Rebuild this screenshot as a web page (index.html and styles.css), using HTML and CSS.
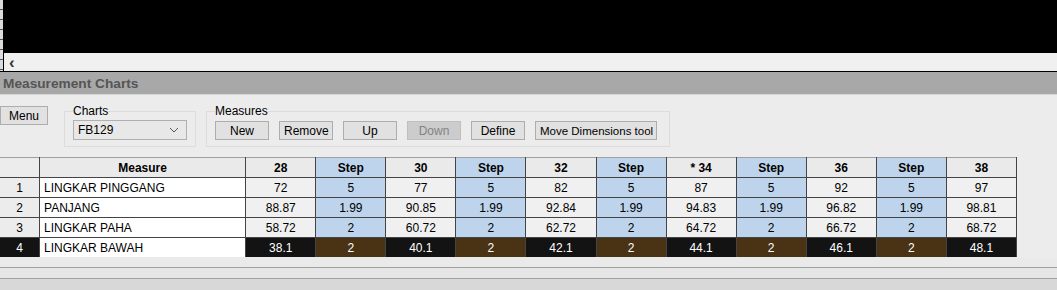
FILE: index.html
```html
<!DOCTYPE html>
<html lang="en">
<head>
  <meta charset="UTF-8" />
  <title>Measurement Charts</title>
  <link rel="stylesheet" href="styles.css">
</head>
<body>
  <div class="viewer">
    <div class="ruler"></div>
    <div class="viewer-main">
      <div class="canvas"></div>
      <div class="hscroll"><span class="arrow">&lsaquo;</span></div>
    </div>
  </div>

  <div class="title">Measurement Charts</div>

  <div class="toolbar">
    <button class="btn menu-btn">Menu</button>

    <fieldset class="group charts">
      <legend>Charts</legend>
      <div class="combo">
        <span>FB129</span>
        <svg width="10" height="6" viewBox="0 0 10 6"><path d="M1 1 L5 5 L9 1" fill="none" stroke="#555" stroke-width="1"/></svg>
      </div>
    </fieldset>

    <fieldset class="group measures">
      <legend>Measures</legend>
      <button class="btn w54">New</button>
      <button class="btn w54">Remove</button>
      <button class="btn w54">Up</button>
      <button class="btn w54 disabled">Down</button>
      <button class="btn w54">Define</button>
      <button class="btn wide">Move Dimensions tool</button>
    </fieldset>
  </div>

  <div class="grid-area">
    <table class="chart" id="chart"></table>
  </div>

  <div class="status">
    <div class="status-a"></div>
    <div class="status-b"></div>
  </div>

  <script>
    const sizes = ['28', '30', '32', '* 34', '36', '38'];
    const rows = [
      { name: 'LINGKAR PINGGANG', vals: ['72', '77', '82', '87', '92', '97'], step: '5' },
      { name: 'PANJANG', vals: ['88.87', '90.85', '92.84', '94.83', '96.82', '98.81'], step: '1.99' },
      { name: 'LINGKAR PAHA', vals: ['58.72', '60.72', '62.72', '64.72', '66.72', '68.72'], step: '2' },
      { name: 'LINGKAR BAWAH', vals: ['38.1', '40.1', '42.1', '44.1', '46.1', '48.1'], step: '2' }
    ];

    let html = '<thead><tr><th class="num"></th><th class="name">Measure</th>';
    sizes.forEach((s, i) => {
      html += `<th>${s}</th>`;
      if (i < sizes.length - 1) html += '<th class="step">Step</th>';
    });
    html += '</tr></thead><tbody>';
    rows.forEach((r, n) => {
      const sel = n === rows.length - 1 ? ' class="selected"' : '';
      html += `<tr${sel}><td class="num">${n + 1}</td><td class="name">${r.name}</td>`;
      r.vals.forEach((v, i) => {
        html += `<td>${v}</td>`;
        if (i < r.vals.length - 1) html += `<td class="step">${r.step}</td>`;
      });
      html += '</tr>';
    });
    html += '</tbody>';
    document.getElementById('chart').innerHTML = html;
  </script>
</body>
</html>
```

FILE: styles.css
```css
body {
  margin: 0;
  background: #ececec;
  font-family: "Liberation Sans", Arial, sans-serif;
  font-size: 12px;
  color: #000;
  width: 1057px;
  height: 290px;
  overflow: hidden;
}
.viewer {
  display: flex;
  height: 71px;
  border-bottom: 1px solid #000;
}
.ruler {
  width: 3px;
  background: #dcdcdc repeating-linear-gradient(to bottom, transparent 0, transparent 9px, #555 9px, #555 10px);
}
.viewer-main {
  flex: 1;
  display: flex;
  flex-direction: column;
}
.canvas {
  height: 53px;
  background: #000;
}
.hscroll {
  flex: 1;
  background: #f0f0f0;
  border-left: 1px solid #000;
  display: flex;
  align-items: center;
  padding-left: 5px;
}
.arrow {
  font-size: 17px;
  font-weight: bold;
  color: #333;
  line-height: 1;
  margin-top: 0;
}
.title {
  height: 22px;
  line-height: 23px;
  background: #a8a8a8;
  color: #555;
  font-weight: bold;
  font-size: 13.7px;
  padding-left: 3px;
  border-bottom: 1px solid #d6d6d6;
}
.toolbar {
  display: flex;
  align-items: flex-start;
  height: 62px;
  background: #ececec;
  box-sizing: border-box;
  padding-top: 10px;
}
.btn {
  font-family: inherit;
  font-size: 12px;
  height: 19px;
  padding: 0 4px;
  background: #e1e1e1;
  border: 1px solid #adadad;
  color: #000;
  margin: 0;
  white-space: nowrap;
}
.menu-btn {
  width: 48px;
  margin-top: 1px;
}
.btn.w54 {
  width: 54px;
}
.btn.wide {
  width: 122px;
  font-size: 11.5px;
}
.btn.disabled {
  background: #cccccc;
  border-color: #bfbfbf;
  color: #838383;
}
.group {
  border: 1px solid #dcdcdc;
  margin: 0;
  padding: 0 8px 0 8px;
  height: 43px;
  box-sizing: border-box;
  position: relative;
  top: -1px;
}
.group legend {
  padding: 0;
  font-size: 12px;
  color: #000;
  margin-left: 0;
}
.charts {
  margin-left: 16px;
  width: 130px;
}
.combo {
  width: 114px;
  height: 20px;
  box-sizing: border-box;
  border: 1px solid #b0b0b0;
  background: #e8e8e8;
  display: flex;
  align-items: center;
  justify-content: space-between;
  padding: 0 7px 0 4px;
  margin-top: 2px;
}
.measures {
  margin-left: 10px;
  width: 464px;
  display: flex;
  gap: 10px;
  align-items: flex-start;
  padding-top: 1px;
}
.measures .btn {
  margin-top: 2px;
}
.grid-area {
  height: 100px;
  background: #ececec;
}
.chart {
  border-collapse: collapse;
  table-layout: fixed;
  width: 1017px;
  border-top: 1px solid #a0a0a0;
  border-right: 1px solid #a0a0a0;
}
.chart th, .chart td {
  height: 19px;
  padding: 0;
  text-align: center;
  border: 1px solid #444;
  width: 69px;
  font-size: 12px;
  white-space: nowrap;
}
.chart th {
  background: #eaeaea;
  font-weight: bold;
  border-top: none;
}
.chart td {
  background: #f0f0f0;
}
.chart th.num, .chart td.num {
  width: 39px;
  border-left: none;
  background: #ececec;
}
.chart .name {
  width: 205px;
}
.chart td.name {
  background: #fff;
  text-align: left;
  padding-left: 4px;
}
.chart .step {
  background: #bdd4ec;
}
.chart tr.selected td {
  background: #131313;
  color: #fff;
}
.chart tr.selected td.step {
  background: #4a3215;
}
.chart tr.selected td.name {
  background: #fff;
  color: #000;
}
.status-a {
  height: 10px;
  background: #eaeaea;
  border-bottom: 1px solid #a0a0a0;
}
.status-b {
  height: 10px;
  background: #e6e6e6;
  border-bottom: 1px solid #a0a0a0;
}
.status {
  background: #d8d8d8;
  height: 40px;
}
```
